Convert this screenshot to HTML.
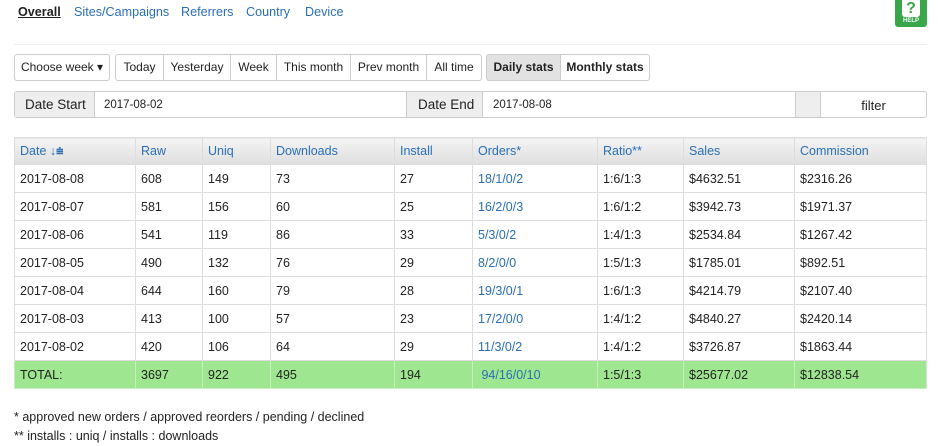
<!DOCTYPE html><html><head><style>
body{margin:0;width:938px;height:446px;background:#fff;font-family:"Liberation Sans",Arial,sans-serif;font-size:13px;color:#222;position:relative;overflow:hidden}
.a{position:absolute}
.nav span{position:absolute;top:5px;color:#2a6fb5;font-size:12.6px}
.btn{position:absolute;top:54px;height:27px;border:1px solid #ccc;box-sizing:border-box;line-height:25px;text-align:center;font-size:12px;background:#fff}
table{position:absolute;left:14px;top:137px;width:913px;border-collapse:collapse;font-size:12.5px}
td,th{border:1px solid #ddd;height:27px;padding:0 0 0 5px;text-align:left;font-weight:normal}
th{background:linear-gradient(#f4f4f4,#dedede);color:#2a6fb5;height:26px}
td.l{color:#2a6fb5}
tr.t td{background:#9fe690;border-color:#c8eec0}
</style></head><body>
<div class="nav">
<span style="left:18px;color:#222;font-weight:bold;text-decoration:underline">Overall</span>
<span style="left:74px">Sites/Campaigns</span>
<span style="left:181px">Referrers</span>
<span style="left:246px">Country</span>
<span style="left:305px">Device</span>
</div>
<div class="a" style="left:895px;top:0;width:32px;height:27px;background:#3aa64a;border-radius:0 0 3px 3px">
<div class="a" style="left:7px;top:0;width:18px;height:17px;background:#fff;border-radius:0 0 3px 3px;color:#3aa64a;font-weight:bold;font-size:16px;text-align:center;line-height:17px">?</div>
<div class="a" style="left:0;top:18px;width:32px;color:#fff;font-size:6px;font-weight:bold;text-align:center">HELP</div></div>
<div class="a" style="left:14px;top:44px;width:913px;border-top:1px solid #eee"></div>
<div class="btn" style="left:14px;width:96px;border-radius:3px">Choose week ▾</div>
<div class="btn" style="left:115px;width:49px;border-radius:3px 0 0 3px">Today</div>
<div class="btn" style="left:163px;width:68px">Yesterday</div>
<div class="btn" style="left:230px;width:47px">Week</div>
<div class="btn" style="left:276px;width:75px">This month</div>
<div class="btn" style="left:350px;width:77px">Prev month</div>
<div class="btn" style="left:426px;width:56px;border-radius:0 3px 3px 0">All time</div>
<div class="btn" style="left:486px;width:75px;background:#e2e2e2;font-weight:bold;border-radius:3px 0 0 3px">Daily stats</div>
<div class="btn" style="left:560px;width:90px;font-weight:bold;border-radius:0 3px 3px 0">Monthly stats</div>
<div class="a" style="left:14px;top:91px;width:913px;height:27px;border:1px solid #ccc;box-sizing:border-box;border-radius:3px;background:#fff"></div>
<div class="a" style="left:15px;top:92px;width:80px;height:25px;background:#eee;border-right:1px solid #ccc;line-height:25px;font-size:13.5px;padding-left:10px;box-sizing:border-box">Date Start</div>
<div class="a" style="left:104px;top:93px;line-height:25px;font-size:11.5px">2017-08-02</div>
<div class="a" style="left:406px;top:92px;width:77px;height:25px;background:#eee;border-left:1px solid #ccc;border-right:1px solid #ccc;line-height:25px;font-size:13.5px;padding-left:11px;box-sizing:border-box">Date End</div>
<div class="a" style="left:493px;top:93px;line-height:25px;font-size:11.5px">2017-08-08</div>
<div class="a" style="left:795px;top:92px;width:24px;height:25px;background:#eee;border-left:1px solid #ccc;border-right:1px solid #ccc"></div>
<div class="a" style="left:820px;top:92px;width:107px;line-height:27px;text-align:center;font-size:13px">filter</div>
<table>
<colgroup><col style="width:121px"><col style="width:67px"><col style="width:68px"><col style="width:124px"><col style="width:78px"><col style="width:125px"><col style="width:86px"><col style="width:111px"><col></colgroup>
<tr><th>Date <b>↓⩧</b></th><th>Raw</th><th>Uniq</th><th>Downloads</th><th>Install</th><th>Orders*</th><th>Ratio**</th><th>Sales</th><th>Commission</th></tr>
<tr><td>2017-08-08</td><td>608</td><td>149</td><td>73</td><td>27</td><td class="l">18/1/0/2</td><td>1:6/1:3</td><td>$4632.51</td><td>$2316.26</td></tr>
<tr><td>2017-08-07</td><td>581</td><td>156</td><td>60</td><td>25</td><td class="l">16/2/0/3</td><td>1:6/1:2</td><td>$3942.73</td><td>$1971.37</td></tr>
<tr><td>2017-08-06</td><td>541</td><td>119</td><td>86</td><td>33</td><td class="l">5/3/0/2</td><td>1:4/1:3</td><td>$2534.84</td><td>$1267.42</td></tr>
<tr><td>2017-08-05</td><td>490</td><td>132</td><td>76</td><td>29</td><td class="l">8/2/0/0</td><td>1:5/1:3</td><td>$1785.01</td><td>$892.51</td></tr>
<tr><td>2017-08-04</td><td>644</td><td>160</td><td>79</td><td>28</td><td class="l">19/3/0/1</td><td>1:6/1:3</td><td>$4214.79</td><td>$2107.40</td></tr>
<tr><td>2017-08-03</td><td>413</td><td>100</td><td>57</td><td>23</td><td class="l">17/2/0/0</td><td>1:4/1:2</td><td>$4840.27</td><td>$2420.14</td></tr>
<tr><td>2017-08-02</td><td>420</td><td>106</td><td>64</td><td>29</td><td class="l">11/3/0/2</td><td>1:4/1:2</td><td>$3726.87</td><td>$1863.44</td></tr>
<tr class="t"><td>TOTAL:</td><td>3697</td><td>922</td><td>495</td><td>194</td><td class="l">&nbsp;94/16/0/10</td><td>1:5/1:3</td><td>$25677.02</td><td>$12838.54</td></tr>
</table>
<div class="a" style="left:14px;top:410px;font-size:12.5px">* approved new orders / approved reorders / pending / declined</div>
<div class="a" style="left:14px;top:429px;font-size:12.5px">** installs : uniq / installs : downloads</div>
</body></html>
